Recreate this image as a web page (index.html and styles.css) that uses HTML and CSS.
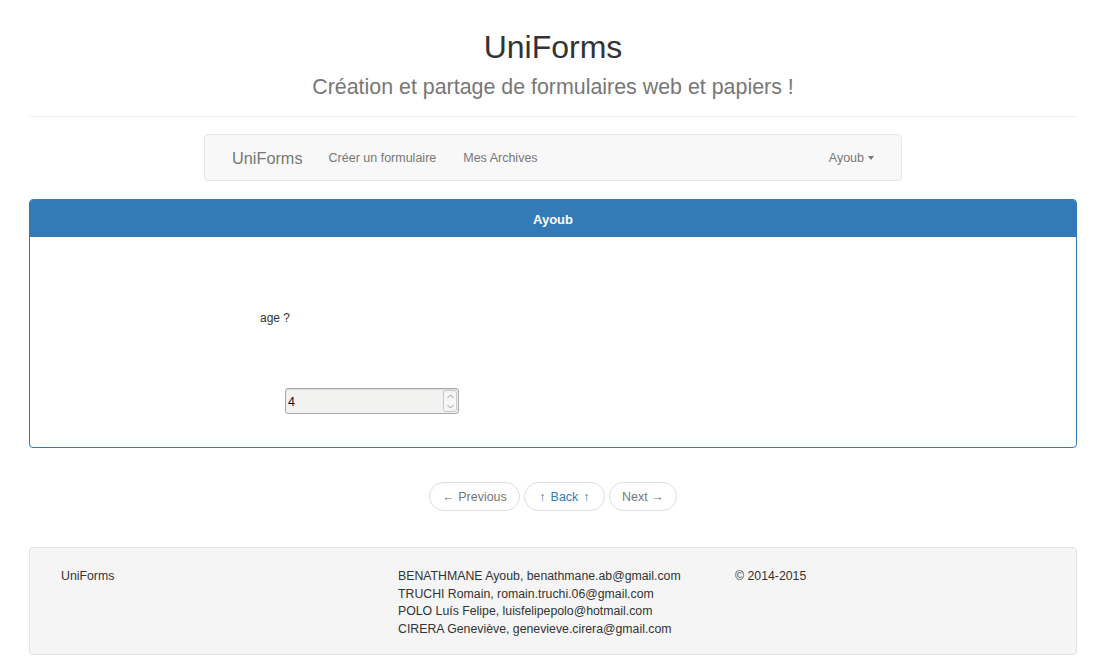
FILE: index.html
```html
<!DOCTYPE html>
<html lang="fr">
<head>
<meta charset="utf-8">
<title>UniForms</title>
<link rel="stylesheet" href="styles.css">
</head>
<body>
<div class="container">
  <header class="page-header">
    <h1 class="title">UniForms</h1>
    <p class="subtitle">Création et partage de formulaires web et papiers !</p>
  </header>
  <nav class="navbar">
    <span class="brand">UniForms</span>
    <a class="nav-link">Créer un formulaire</a>
    <a class="nav-link">Mes Archives</a>
    <span class="spacer"></span>
    <a class="nav-link user">Ayoub <span class="caret"></span></a>
  </nav>
  <section class="panel">
    <div class="panel-heading">Ayoub</div>
    <div class="panel-body">
      <p class="question">age ?</p>
      <div class="number-input">
        <span class="value">4</span>
        <span class="spin">
          <span class="spin-btn"><svg width="7" height="5" viewBox="0 0 7 5"><path d="M0.5 4 L3.5 1 L6.5 4" fill="none" stroke="#9a9a9a" stroke-width="1"/></svg></span>
          <span class="spin-btn"><svg width="7" height="5" viewBox="0 0 7 5"><path d="M0.5 1 L3.5 4 L6.5 1" fill="none" stroke="#9a9a9a" stroke-width="1"/></svg></span>
        </span>
      </div>
    </div>
  </section>
  <ul class="pager">
    <li><a class="pg">&larr; Previous</a></li>
    <li><a class="pg active"><span class="up">&uarr;</span> Back <span class="up">&uarr;</span></a></li>
    <li><a class="pg">Next &rarr;</a></li>
  </ul>
  <footer class="footer">
    <div class="f-col f1">UniForms</div>
    <div class="f-col f2">
      <div>BENATHMANE Ayoub, benathmane.ab@gmail.com</div>
      <div>TRUCHI Romain, romain.truchi.06@gmail.com</div>
      <div>POLO Luís Felipe, luisfelipepolo@hotmail.com</div>
      <div>CIRERA Geneviève, genevieve.cirera@gmail.com</div>
    </div>
    <div class="f-col f3">&copy; 2014-2015</div>
  </footer>
</div>
</body>
</html>
```

FILE: styles.css
```css
* { box-sizing: border-box; }
html, body { margin: 0; padding: 0; background: #fff; }
body {
  font-family: "Liberation Sans", Arial, sans-serif;
  font-size: 13px;
  color: #333;
}
.container {
  width: 1048px;
  margin-left: 29px;
}
.page-header {
  text-align: center;
  padding-top: 27px;
  padding-bottom: 15px;
  border-bottom: 1px solid #eee;
}
.title {
  margin: 0;
  font-size: 32px;
  font-weight: 400;
  line-height: 40px;
  color: #333;
}
.subtitle {
  margin: 6px 0 0;
  font-size: 21.4px;
  line-height: 28px;
  color: #777;
}
.navbar {
  width: 698px;
  height: 47px;
  margin: 17px auto 0;
  display: flex;
  align-items: center;
  background: #f8f8f8;
  border: 1px solid #e7e7e7;
  border-radius: 4px;
  padding: 0 27px 0 27px;
}
.brand {
  font-size: 16.3px;
  color: #777;
  margin-right: 26px;
  padding-top: 2px;
}
.nav-link {
  color: #777;
  font-size: 12.5px;
  margin-right: 27px;
}
.nav-link.user { margin-right: 0; display: flex; align-items: center; }
.spacer { flex: 1; }
.caret {
  display: inline-block;
  width: 0; height: 0;
  margin-left: 4px;
  border-top: 4px solid #777;
  border-left: 3.5px solid transparent;
  border-right: 3.5px solid transparent;
}
.panel {
  margin-top: 18px;
  border: 1px solid #337ab7;
  border-radius: 4px;
  height: 249px;
  overflow: hidden;
}
.panel-heading {
  background: #337ab7;
  color: #fff;
  font-weight: 700;
  font-size: 13px;
  text-align: center;
  height: 37px;
  line-height: 39px;
  overflow: hidden;
}
.panel-body {
  padding-left: 230px;
  padding-top: 73px;
}
.question {
  margin: 0;
  font-size: 12px;
  line-height: 16px;
}
.number-input {
  margin-top: 62px;
  margin-left: 25px;
  width: 174px;
  height: 26px;
  border: 1px solid #a9a9a9;
  border-radius: 3px;
  background: #f2f2f0;
  display: flex;
  align-items: center;
  justify-content: space-between;
  padding: 0 1px 0 2px;
  box-shadow: inset 0 1px 1px rgba(0,0,0,.1);
}
.value { font-size: 12.5px; color: #111; padding-top: 2px; }
.spin {
  display: flex;
  flex-direction: column;
  height: 22px;
  width: 14px;
  border: 1px solid #c8c8c8;
  border-radius: 3px;
  background: #f6f6f6;
}
.spin-btn {
  flex: 1;
  display: flex;
  align-items: center;
  justify-content: center;
}
.pager {
  list-style: none;
  margin: 34px 0 0;
  padding: 0;
  display: flex;
  justify-content: center;
  gap: 4px;
}
.pg {
  display: block;
  height: 29px;
  line-height: 28px;
  padding: 0 12px;
  border: 1px solid #ddd;
  border-radius: 15px;
  background: #fff;
  color: #777;
  font-size: 12.5px;
}
.pg.active { color: #337ab7; padding: 0 13px; }
.up { display: inline-block; margin: 0 1.5px; }
.footer {
  margin-top: 36px;
  height: 108px;
  background: #f5f5f5;
  border: 1px solid #e3e3e3;
  border-radius: 4px;
  display: flex;
  padding: 20px 0 0 31px;
  font-size: 12.3px;
  line-height: 17.6px;
  color: #333;
}
.f1 { width: 337px; }
.f2 { width: 337px; }
```
